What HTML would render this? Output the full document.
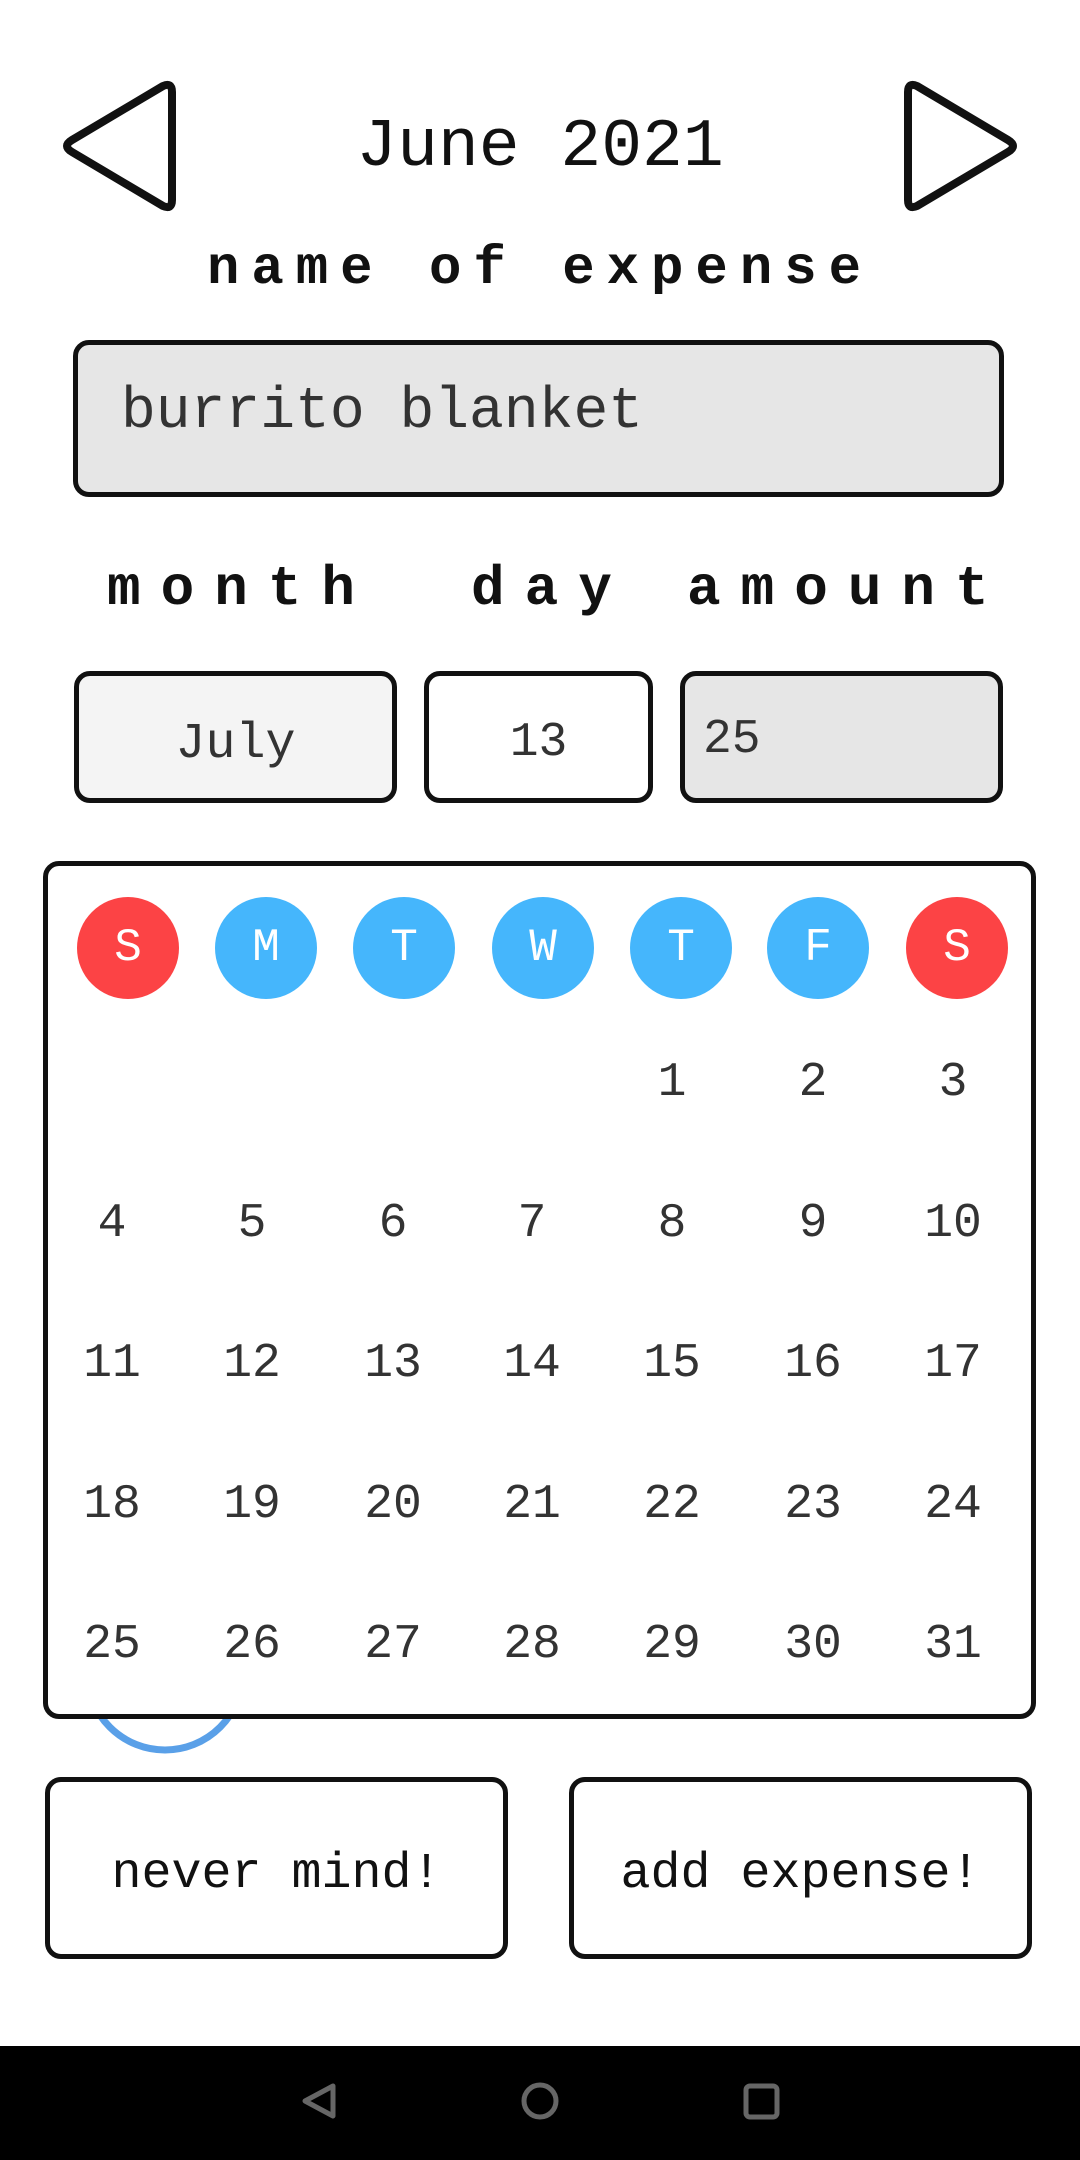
<!DOCTYPE html>
<html><head><meta charset="utf-8"><style>
*{margin:0;padding:0;box-sizing:border-box}
body{width:1080px;height:2160px;background:#fff;position:relative;overflow:hidden;font-family:"Liberation Mono","DejaVu Sans Mono",monospace;color:#222}
.a{position:absolute}
.box{position:absolute;border:5px solid #111;border-radius:16px}
.c{text-align:center}
.lbl{font-size:56px;font-weight:bold;letter-spacing:20px;color:#111}
.circ{position:absolute;width:102px;height:102px;border-radius:50%;color:#fff;font-size:46px;line-height:102px;text-align:center;transform:translate(-51px,-51px)}
.num{position:absolute;font-size:48px;transform:translate(-50%,-50%);color:#333}
</style></head><body>
<svg class="a" style="left:0;top:0" width="1080" height="260">
<path d="M163 86 L72 140 Q62 146 72 152 L163 206 Q172 210 172 200 L172 92 Q172 82 163 86 Z" fill="none" stroke="#111" stroke-width="8" stroke-linejoin="round"/>
<path d="M917 86 L1008 140 Q1018 146 1008 152 L917 206 Q908 210 908 200 L908 92 Q908 82 917 86 Z" fill="none" stroke="#111" stroke-width="8" stroke-linejoin="round"/>
</svg>
<div class="a c" style="left:0;width:1080px;top:109px;font-size:68px;color:#111">June 2021</div>
<div class="a c lbl" style="left:0;width:1080px;top:239px;font-size:54px;letter-spacing:12px">name of expense</div>
<div class="box" style="left:73px;top:340px;width:931px;height:157px;background:#e6e6e6"></div>
<div class="a" style="left:121px;top:380px;font-size:58px;color:#333">burrito blanket</div>
<div class="a lbl" style="left:107px;top:557px">month</div>
<div class="a lbl" style="left:471px;top:557px">day</div>
<div class="a lbl" style="left:687px;top:557px">amount</div>
<div class="box" style="left:74px;top:671px;width:323px;height:132px;background:#f4f4f4"></div>
<div class="box" style="left:424px;top:671px;width:229px;height:132px;background:#fff"></div>
<div class="box" style="left:680px;top:671px;width:323px;height:132px;background:#e6e6e6"></div>
<div class="a c" style="left:74px;width:323px;top:716px;font-size:50px;color:#333">July</div>
<div class="a c" style="left:424px;width:229px;top:716px;font-size:48px;color:#333">13</div>
<div class="a" style="left:703px;top:713px;font-size:48px;color:#333">25</div>
<svg class="a" style="left:0;top:0" width="1080" height="1800"><circle cx="165" cy="1672" r="78" fill="none" stroke="#5aa0e8" stroke-width="7"/></svg>
<div class="box" style="left:43px;top:861px;width:993px;height:858px;background:#fff"></div>
<div class="circ" style="left:128px;top:948px;background:#fc4345">S</div>
<div class="circ" style="left:266px;top:948px;background:#45b6fc">M</div>
<div class="circ" style="left:404px;top:948px;background:#45b6fc">T</div>
<div class="circ" style="left:543px;top:948px;background:#45b6fc">W</div>
<div class="circ" style="left:681px;top:948px;background:#45b6fc">T</div>
<div class="circ" style="left:818px;top:948px;background:#45b6fc">F</div>
<div class="circ" style="left:957px;top:948px;background:#fc4345">S</div>
<div id="g"></div>
<script>
var xs=[112,252,393,532,672,813,953],ys=[1083,1224,1364,1505,1645],h='';
for(var d=1;d<=31;d++){var i=d+3;var r=Math.floor(i/7),c=i%7;h+='<div class="num" style="left:'+xs[c]+'px;top:'+ys[r]+'px">'+d+'</div>';}
document.getElementById('g').innerHTML=h;
</script>
<div class="box" style="left:45px;top:1777px;width:463px;height:182px"></div>
<div class="box" style="left:569px;top:1777px;width:463px;height:182px"></div>
<div class="a c" style="left:45px;width:463px;top:1846px;font-size:50px;color:#111">never mind!</div>
<div class="a c" style="left:569px;width:463px;top:1846px;font-size:50px;color:#111">add expense!</div>
<div class="a" style="left:0;top:2046px;width:1080px;height:114px;background:#000"></div>
<svg class="a" style="left:0;top:2046px" width="1080" height="114">
<path d="M333 40 L305 55 L333 70 Z" fill="none" stroke="#666" stroke-width="5" stroke-linejoin="round"/>
<circle cx="540" cy="55" r="16" fill="none" stroke="#666" stroke-width="5"/>
<rect x="746" y="40" width="31" height="31" rx="4" fill="none" stroke="#666" stroke-width="5"/>
</svg>
</body></html>
